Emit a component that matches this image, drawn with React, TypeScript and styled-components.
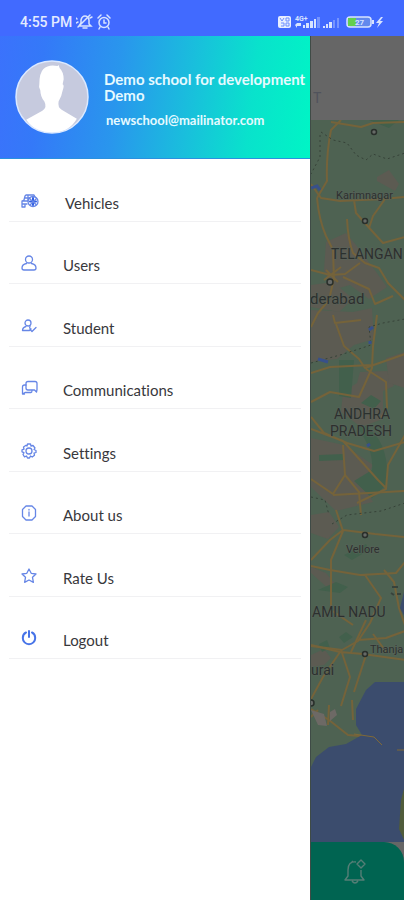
import React from "react";
import styled, { createGlobalStyle } from "styled-components";

const GlobalStyle = createGlobalStyle`
  * { box-sizing: border-box; }
  body { margin: 0; background: #fff; font-family: Lato, sans-serif; font-variant-ligatures: none; }
`;

const Screen = styled.div`
  min-height: 100vh;
  display: flex;
  flex-direction: column;
  overflow: hidden;
`;

const StatusBar = styled.header`
  height: 36px;
  padding: 8px 20px 0;
  display: flex;
  align-items: center;
  justify-content: space-between;
  background: #416aff;
  color: #e4ebff;
  font: 500 14px/20px Roboto, sans-serif;
`;

const StatusGroup = styled.div`
  display: flex;
  align-items: center;
  gap: 4px;
  white-space: nowrap;
`;

const Main = styled.main`
  flex: 1;
  display: flex;
  align-items: stretch;
`;

const Drawer = styled.aside`
  flex: 0 0 310px;
  min-width: 0;
  background: #fff;
`;

const Profile = styled.section`
  height: 123px;
  padding: 0 0 0 15px;
  display: flex;
  align-items: center;
  gap: 15px;
  background: linear-gradient(97deg, #3b72fc 0%, #3479f8 14%, #2996ed 38%, #19bfdc 61%, #09e2cc 80%, #00f5c5 100%);
  border-bottom: 1px solid #2a91df;
  color: #e6faff;
`;

const Avatar = styled.svg`
  flex: none;
  width: 74px;
  height: 74px;
`;

const ProfileText = styled.div`
  min-width: 0;
  padding-top: 5px;
`;

const SchoolName = styled.h1`
  margin: 0;
  font-size: 15px;
  line-height: 16px;
  font-weight: 700;
  white-space: nowrap;
`;

const NameLine = styled.span`
  display: block;
`;

const Email = styled.p`
  margin: 9px 0 0 2px;
  font-size: 13px;
  line-height: 16px;
  font-weight: 700;
`;

const Menu = styled.nav`
  height: 500px;
  padding: 0 9px;
  display: grid;
  grid-template-rows: repeat(8, 1fr);
`;

const MenuItem = styled.a<{ $wide?: boolean }>`
  display: grid;
  grid-template-columns: 20px 1fr;
  column-gap: ${(p) => (p.$wide ? 24 : 22)}px;
  align-items: end;
  padding: 0 12px 8px;
  border-bottom: 1px solid #f1f1f3;
  color: #38383c;
  font-size: 15px;
  line-height: 20px;
  text-decoration: none;
`;

const MenuIcon = styled.svg<{ $bold?: boolean }>`
  width: 18px;
  height: 16px;
  margin-bottom: 4px;
  fill: none;
  stroke: ${(p) => (p.$bold ? "#4774e8" : "#6686e6")};
  stroke-width: ${(p) => (p.$bold ? 2 : 1.3)};
  stroke-linecap: round;
  stroke-linejoin: round;
`;

const Behind = styled.section`
  flex: 1;
  min-width: 0;
  display: flex;
  flex-direction: column;
  background: #666;
  border-left: 1px solid #3f4b46;
`;

const PageHeader = styled.header`
  height: 84px;
  padding: 52px 2px 0;
  color: #50535c;
  font: 14px/20px Roboto, sans-serif;
`;

const MapView = styled.svg`
  display: block;
  flex: 1;
  width: 100%;
  min-height: 0;
  background: #4e6252;
`;

const BottomBar = styled.footer`
  height: 58px;
  display: flex;
  align-items: center;
  justify-content: center;
  padding-right: 6px;
  background: #006451;
  border-top-right-radius: 20px;
`;

const BellButton = styled.button`
  padding: 0;
  border: 0;
  background: none;
  color: #557e76;
  line-height: 0;
`;

const icons: Record<string, React.ReactNode> = {
  Vehicles: (
    <>
      <path d="M1 14V8l2-1 1-4 1-1h8l1 2M1 8h6M4 5h5M1 11h5M1 14h3v-2M7 2v5" />
      <circle cx="12" cy="8.500" r="5" />
      <path d="M12 5v7M9 8.500h6" stroke="#315fe4" strokeWidth="2" />
      <path d="M8.500 5.500l6.500 6M15.500 5.500l-6 6" />
    </>
  ),
  Users: (
    <>
      <circle cx="8" cy="4.500" r="3.500" />
      <path d="M5.500 8.500C2.500 9 1 11 1 13q0 2 2 2h10q2 0 2-2c0-2-1.500-4-4.500-4.500" />
    </>
  ),
  Student: (
    <>
      <circle cx="7" cy="5" r="3" />
      <path d="M5 8.500c-2 .5-3.500 2-3.500 4h7M9 8.500q-1 2 1 2.500M9 11.500l2 2 4-4" />
    </>
  ),
  Communications: (
    <>
      <path d="M7 1.500h7q2 0 2 2v6l-.5 2.500-2-2H7q-2 0-2-2V3.500q0-2 2-2z" />
      <path d="M5 5H3.500q-2 0-2 2v7L4 12.500h6q1 0 1-2M1.500 14h2" />
    </>
  ),
  Settings: (
    <>
      <path d="M6.500 1h3l.5 2 2-.5L14 5l-1 1.500 2 1v2l-2 .7.500 2-2.300 1.800-1.700-1-1 2h-2l-1-2-2 .8L2 11.500l1-1.800-2-.9v-2l2-.7L2.500 4 5 2.300 6 3z" />
      <circle cx="8" cy="8" r="3" />
    </>
  ),
  "About us": (
    <>
      <path d="M5 1h6l3.500 3.500v7L11 15H5l-3.500-3.500v-7z" />
      <path d="M8 7v4M8 4.500v.5" />
    </>
  ),
  "Rate Us": <path d="M8 1l2.200 4.300 4.800.7-3.500 3.300.9 5L8 12l-4.400 2.300.9-5L1 6l4.800-.7z" />,
  Logout: <path d="M5 2.500C2.800 3.500 1.800 5.500 1.800 8a6.200 6.200 0 0 0 12.400 0c0-2.500-1-4.500-3.200-5.500M8 1v6" />,
};

const roads = [
  "M30 0L20 10Q15 35 16 61L6 78M20 2L50 7 62 3 94 2",
  "M0 64L10 78 29 81 72 79 94 77M6 78Q8 100 15 116L22 130 23 160M43 80L45 93 61 111 72 123 94 117M74 79L62 96 58 108M36 99Q37 120 42 133L54 143 68 148 77 163 94 180",
  "M0 150L19 155 34 154 49 143M23 158L18 180 7 193 0 207M32 157L58 169 64 184 82 176M15 150l12 12M13 160l17-13",
  "M22 195L24 203 50 200M25 204L33 226 48 239 54 248 94 234M66 195L62 226 61 248 48 277 19 272 0 282M0 253L19 247 61 245M55 249L75 262 76 288 70 298",
  "M0 297L13 313 36 323 63 331 94 322M0 309L32 321 67 360 75 368M32 325L34 355 22 374 0 359M22 375L94 371M34 355L48 372 50 395",
  "M94 315L77 345 75 369 46 383M0 440L19 420 32 410 64 414 94 417M25 390L32 411 20 440 20 462",
  "M0 446L19 450 49 455 85 453 94 442M73 450L83 462 88 488 94 505M54 455L70 478 59 503 47 521 31 530 0 526M47 520L75 518 94 511M20 462L20 490 42 505",
  "M0 525L29 532 52 534 94 540M29 532L12 557 0 579M30 530L39 557 30 586M56 532L43 572M62 514L76 533M55 500L40 532",
  "M0 589L18 600 37 615 60 617 70 625M18 585L17 605M41 580L42 600M0 597L7 590M86 630h8",
];

function RegionMap() {
  return (
    <MapView viewBox="0 0 94 722" preserveAspectRatio="xMinYMin slice" role="img" aria-label="Map of southern India">
      <g fill="#5c5b52">
        <path d="M66 57l12-7 10 14-4 7-18-10zM15 122l20-9 10 12 15 20 16 22-18 12-19-14-18 5-8-20zM0 165l22-3 20 17-14 13-28-5z" />
        <path d="M0 190l42 2 19-4 2 31-20 6-17 14-26 3zM49 252l27-1 7 15-11 5v28l-22 8-20-15 2-20 14-9zM0 318l33 7 29 20-10 20 10 17-37 9-25-24z" />
        <path d="M75 238l19-6v36l-16-5zM0 395l18-3 10 15-11 12-17-6zM0 447l15 6 10 12-6 5-19-17zM0 535l13-6 7 9-7 7-13 2z" />
      </g>
      <g fill="#42604c">
        <path d="M28 240h15l-3 38-12-2zM50 283l10-8 10 6-7 8zM55 306q24 17 21 58l-15 14-18-17 18-11q2-20-15-43zM8 335l25-1v6l-25 1zM33 435l22-11 3 6-17 10zM7 470l18-8 12 5-8 6zM28 517l7-5 7 5-9 6zM8 524l8-4 3 8-8 4zM58 0h30l-10 8z" />
      </g>
      <g fill="none" stroke="#75633a" strokeWidth="2" strokeLinejoin="round">
        {roads.map((d) => <path d={d} key={d} />)}
      </g>
      <g fill="none" stroke="#364238" strokeDasharray="2 3">
        <path d="M10 12L22 20 36 23 45 35 55 40 62 34 76 39 94 33M9 15L9 37 0 54M0 243L29 235 48 229 60 225 58 207 72 203 94 199M0 377L14 380 18 395M21 404l15-9 34-4 24-8" />
      </g>
      <g stroke="#38508a" fill="none" strokeWidth="3">
        <path d="M0 68l6-2 3 4M7 239l10 3M58 210l4-3M59 221v3M56 326l3-2" />
      </g>
      <path fill="#3b4c6d" d="M94 562H64L55 570 45 589 45 605 51 615 35 624 18 627 5 637 0 647V722H94zM94 468l-5 20 5 9z" />
      <path fill="#505c3b" d="M94 665l-4 15-2 29 6 13z" />
      <path fill="none" stroke="#806937" d="M43 614l20 3 8 8M86 630h8" />
      <g fill="#6d6965"><path d="M0 590l13 4 3 12-9-1zM19 592l5-3 2 6-7 6z" /></g>
      <g fill="#666966" stroke="#292f2b" strokeWidth="1.500">
        <circle cx="63" cy="12" r="2.500" /><circle cx="54" cy="101" r="2.500" /><circle cx="19" cy="162" r="3" /><circle cx="54" cy="415" r="2.500" /><circle cx="54" cy="534" r="2.500" /><circle cx="0" cy="583" r="3" />
      </g>
      <g fill="#2c302e" fontFamily="Roboto, sans-serif" fontSize="11" stroke="#59635a" strokeWidth="1" paintOrder="stroke">
        <text x="25" y="79">Karimnagar</text>
        <text x="20" y="139" fontSize="14">TELANGAN</text>
        <text x="-1" y="184" fontSize="15">derabad</text>
        <text x="51" y="299" textAnchor="middle" fontSize="14">ANDHRA</text>
        <text x="50" y="316" textAnchor="middle" fontSize="14">PRADESH</text>
        <text x="35" y="433">Vellore</text>
        <text x="1" y="497" fontSize="14">AMIL NADU</text>
        <text x="59" y="533">Thanja</text>
        <text x="0" y="555" fontSize="14">urai</text>
      </g>
      <path d="M81 467h6M80 473l3 2M86 474h4" stroke="#38423b" strokeWidth="2" />
    </MapView>
  );
}

function LeftStatus() {
  return (
    <StatusGroup>
      <span>4:55 PM</span>
      <svg width="36" height="16" viewBox="0 0 36 16" fill="none" stroke="#d8e4ff" strokeWidth="1.500" strokeLinecap="round">
        <path d="M3 12l2-3V6q1-4 4-4 3 0 4 4v4l2 2zM7 14h4M2 8L0 9M1 5L0 4M14 4l2-1M2 13L14 1" />
        <circle cx="28" cy="8.500" r="5" /><path d="M28 6v3h2M22 4l3-3M31 1l3 3M24 13l-1 2M32 13l1 2" />
      </svg>
    </StatusGroup>
  );
}

function RightStatus() {
  return (
    <svg width="106" height="18" viewBox="0 0 106 18" fill="#d7e3ff" fontFamily="Roboto, sans-serif">
      <rect y="3" width="13" height="12" rx="2" fill="#e7eeff" />
      <path d="M2 5l2 3 2-3M8 5h3v3H8zM3 10h3v3H3M8 10h3v3H8z" fill="none" stroke="#6d8fff" />
      <text x="17" y="8" fontSize="7" fontWeight="700">4G+</text>
      <path d="M17 12l2-2h4v3h-4v2zM25 12h2v3h-2zM28 10h3v5h-3zM32 8h3v7h-3zM36 6h2v9h-2z" />
      <path d="M39 4h3v11h-3zM55 7h2v8h-2zM59 5h2v10h-2z" opacity=".35" />
      <path d="M45 13h2v2h-2zM48 11h2v4h-2zM51 9h3v6h-3z" />
      <rect x="69" y="4" width="24" height="10" rx="3" fill="#6289ed" stroke="#d7e3ff" strokeWidth="1.500" />
      <path d="M70 5h8v8h-8z" fill="#64cf4d" /><path d="M94 7h2v4h-2z" />
      <text x="77" y="12" fontSize="8" fontWeight="700">27</text>
      <path d="M103 4l-5 6h3l-2 5 6-7h-3l3-4z" />
    </svg>
  );
}

export default function App() {
  return (
    <>
      <GlobalStyle />
      <Screen>
        <StatusBar><LeftStatus /><RightStatus /></StatusBar>
        <Main>
          <Drawer>
            <Profile>
              <Avatar viewBox="0 0 73 73" role="img" aria-label="Profile">
                <circle cx="36.500" cy="36.500" r="35.500" fill="#c6cade" />
                <path d="M11 59l16-9q5-3 2-9-4-5-4-11-2-3-1-6 0-11 4-15 5-5 14-3l1-1 1 3q4 4 4 11l-1 5q2 1 0 6-1 6-4 11-1 6 3 8l15 9Q53 72 36 72 20 72 11 59z" fill="#fff" />
                <circle cx="36.500" cy="36.500" r="35.500" fill="none" stroke="#dce9ff" strokeWidth="1.500" />
              </Avatar>
              <ProfileText>
                <SchoolName>
                  <NameLine>Demo school for development</NameLine>
                  <NameLine>Demo</NameLine>
                </SchoolName>
                <Email>newschool@mailinator.com</Email>
              </ProfileText>
            </Profile>
            <Menu aria-label="Main menu">
              {Object.entries(icons).map(([label, icon]) => (
                <MenuItem href="#" key={label} $wide={label === "Vehicles"}>
                  <MenuIcon viewBox="0 0 18 16" $bold={label === "Logout"} aria-hidden="true">{icon}</MenuIcon>
                  <span>{label}</span>
                </MenuItem>
              ))}
            </Menu>
          </Drawer>
          <Behind>
            <PageHeader>T</PageHeader>
            <RegionMap />
            <BottomBar>
              <BellButton aria-label="Notifications">
                <svg width="26" height="28" viewBox="0 0 26 28" fill="none" stroke="currentColor" strokeWidth="1.400" strokeLinejoin="round">
                  <path d="M14 5Q6 4 6 13v6l-3 4h19l-3-4v-6M10 24q3 4 6 0M9 6l2-2" />
                  <path d="M19 3l4 4-4 4-4-4z" />
                </svg>
              </BellButton>
            </BottomBar>
          </Behind>
        </Main>
      </Screen>
    </>
  );
}
